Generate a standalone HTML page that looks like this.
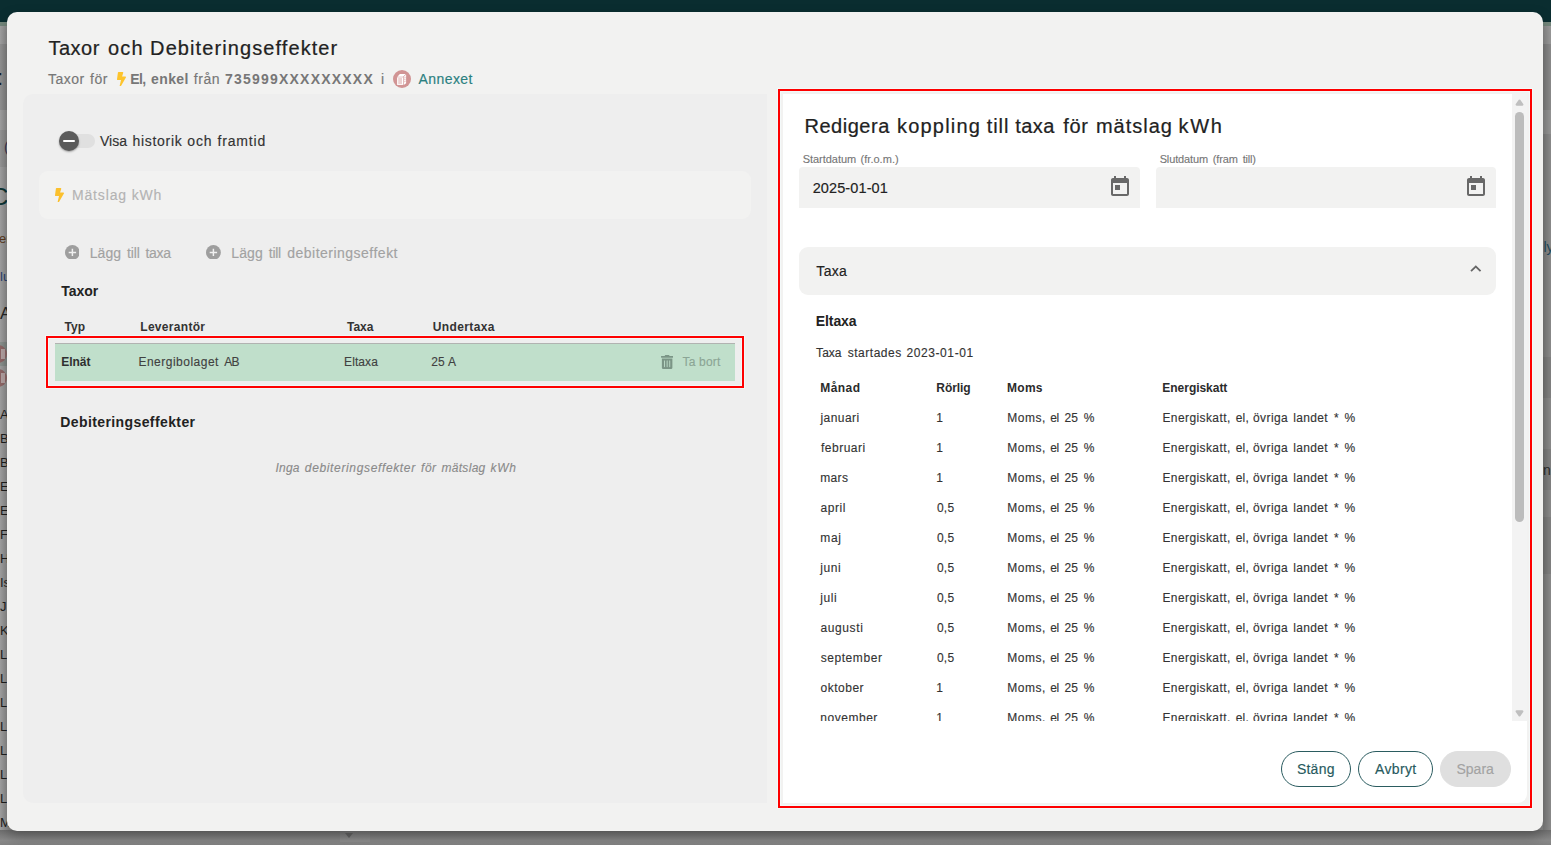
<!DOCTYPE html>
<html lang="sv">
<head>
<meta charset="utf-8">
<title>Taxor och Debiteringseffekter</title>
<style>
*{box-sizing:border-box;margin:0;padding:0}
html,body{width:1551px;height:845px;overflow:hidden}
body{position:relative;background:#8b8b8b;font-family:"Liberation Sans",sans-serif;}
.abs{position:absolute}
.t{position:absolute;white-space:pre;line-height:24px;height:24px}
#topbar{left:0;top:0;width:1551px;height:22px;background:#0a2d30}
#topband{left:0;top:22px;width:1551px;height:4px;background:#74877c}
#bgL{left:0;top:26px;width:8px;height:819px;background:linear-gradient(90deg,#a2a2a2 0,#8d8d8d 100%)}
#bgR{left:1543px;top:26px;width:8px;height:819px;background:linear-gradient(90deg,#7d7d7d 0,#8d8d8d 100%)}
#bgB{left:0;top:830px;width:1551px;height:15px;background:linear-gradient(180deg,#6f6f6f 0,#8a8a8a 70%,#828282 100%)}
.bgt{position:absolute;left:0px;font-size:14px;line-height:16px;color:#1e1e1e;white-space:pre}
#dlg{left:7px;top:12px;width:1536px;height:819px;border-radius:10px;background:#f2f2f1;box-shadow:0 6px 14px rgba(0,0,0,.28)}
#lp{left:16px;top:82px;width:744px;height:709px;border-radius:10px 0 0 10px;background:#eeeeee}
#mbox{left:32px;top:159px;width:712px;height:48px;border-radius:9px;background:#f2f2f1}
#trk{left:55px;top:122px;width:33px;height:14px;border-radius:7px;background:#e0e0e0}
#knob{left:52px;top:119px;width:20px;height:20px;border-radius:50%;background:#5b5b5b;box-shadow:0 1px 2px rgba(0,0,0,.35)}
#knob i{position:absolute;left:4px;top:9px;width:12px;height:2px;background:#fff;border-radius:1px}
#grow{left:48px;top:331px;width:680px;height:38px;background:#c0dfcb;border-top:1px solid #b1b3b1}
.red{position:absolute;border:2px solid #fe0000;box-shadow:0 0 0 1px rgba(245,255,255,.55), inset 0 0 0 1px rgba(245,255,255,.55)}
#red1{left:39px;top:324px;width:698px;height:52px}
#red2{left:771px;top:77px;width:754px;height:719px}
#rp{left:776px;top:82px;width:744px;height:709px;border-radius:0 0 9px 0;background:#ffffff;overflow:hidden}
#scr{left:0;top:0;width:729px;height:627px;overflow:hidden}
#sb{left:729px;top:0;width:15px;height:627px;background:#f3f3f3}
#thumb{left:3px;top:18px;width:9px;height:410px;border-radius:4.5px;background:#bcbcbc}
.inp{position:absolute;top:73px;height:41px;background:#f2f2f1;border-radius:4px 4px 0 0}
#acc{left:16px;top:153px;width:697px;height:48px;border-radius:9px;background:#f2f2f1}
.btn{position:absolute;top:739px;height:36px;border-radius:18px;border:1px solid #2b5c60}
</style>
</head>
<body>
<div id="topbar" class="abs"></div>
<div id="topband" class="abs"></div>
<div id="bgL" class="abs"></div>
<div id="bgR" class="abs"></div>
<div id="bgB" class="abs"></div>
<div class="abs" style="left:0;top:44px;width:8px;height:66px;background:rgba(0,0,0,.085)"></div>
<div class="abs" style="left:0;top:130px;width:8px;height:37px;background:rgba(0,0,0,.06)"></div>
<div class="abs" style="left:0;top:342px;width:8px;height:24px;background:rgba(40,80,60,.16)"></div>
<div class="abs" style="left:1543px;top:26px;width:8px;height:18px;background:rgba(255,255,255,.13)"></div>
<div class="abs" style="left:1543px;top:110px;width:8px;height:24px;background:rgba(255,255,255,.10)"></div>
<div class="abs" style="left:1543px;top:357px;width:8px;height:41px;background:rgba(0,0,0,.06)"></div>
<div class="abs" style="left:1543px;top:449px;width:8px;height:41px;background:rgba(0,0,0,.06)"></div>
<div class="abs" style="left:1543px;top:517px;width:8px;height:57px;background:rgba(0,0,0,.06)"></div>
<div class="bgt" style="left:-3px;top:66px;font-size:22px;line-height:24px;color:#10202a">:</div>
<div class="bgt" style="left:4px;top:139px;font-size:14px;color:#3a3550">(</div>
<div class="bgt" style="left:-9px;top:184px;font-size:24px;line-height:26px;color:#0c3535">C</div>
<div class="bgt" style="left:-1px;top:231px;font-size:13px;color:#5a3a20">er</div>
<div class="bgt" style="left:0px;top:269px;font-size:13px;color:#27406e">lu</div>
<div class="bgt" style="left:0px;top:305px;font-size:17px;line-height:18px;color:#252525">A</div>
<div class="abs" style="left:-11px;top:345px;width:18px;height:18px;border-radius:50%;background:#8f6767"></div>
<div class="abs" style="left:1px;top:349px;width:4px;height:10px;background:#b5a3a3"></div>
<div class="abs" style="left:-11px;top:369px;width:18px;height:18px;border-radius:50%;background:#8f6767"></div>
<div class="abs" style="left:1px;top:373px;width:4px;height:10px;background:#b5a3a3"></div>
<div class="bgt" style="top:407.0px;font-size:13px">A</div>
<div class="bgt" style="top:431.0px;font-size:13px">B</div>
<div class="bgt" style="top:455.0px;font-size:13px">B</div>
<div class="bgt" style="top:479.0px;font-size:13px">E</div>
<div class="bgt" style="top:503.0px;font-size:13px">E</div>
<div class="bgt" style="top:527.0px;font-size:13px">F</div>
<div class="bgt" style="top:551.0px;font-size:13px">H</div>
<div class="bgt" style="top:575.0px;font-size:13px">Is</div>
<div class="bgt" style="top:599.0px;font-size:13px">J</div>
<div class="bgt" style="top:623.0px;font-size:13px">K</div>
<div class="bgt" style="top:647.0px;font-size:13px">L</div>
<div class="bgt" style="top:671.0px;font-size:13px">L</div>
<div class="bgt" style="top:695.0px;font-size:13px">L</div>
<div class="bgt" style="top:719.0px;font-size:13px">L</div>
<div class="bgt" style="top:743.0px;font-size:13px">L</div>
<div class="bgt" style="top:767.0px;font-size:13px">L</div>
<div class="bgt" style="top:791.0px;font-size:13px">L</div>
<div class="bgt" style="top:815.0px;font-size:13px">M</div>
<div class="bgt" style="left:1543.5px;top:239px;font-size:14px;color:#1f4a5c">ly</div>
<div class="bgt" style="left:1543px;top:462px;font-size:14px;color:#2b2b2b">n</div>
<div class="abs" style="left:340px;top:831px;width:30px;height:11px;background:rgba(255,255,255,.05)"></div>
<svg class="abs" style="left:345px;top:833px" width="8" height="5" viewBox="0 0 8 5"><path d="M0 0h8L4 5z" fill="#636363"/></svg>

<div id="dlg" class="abs">
  <div id="lp" class="abs"></div>
  <div id="mbox" class="abs"></div>
  <div id="trk" class="abs"></div>
  <div id="knob" class="abs"><i></i></div>
  <div id="grow" class="abs"></div>
  <div id="red1" class="red"></div>

  <svg class="abs" style="left:109.9px;top:59.6px" width="9" height="14.4" viewBox="0 0 320 512"><path d="M296 160H180.6l42.6-129.8C227.2 15 215.7 0 200 0H56C44 0 33.8 8.9 32.2 20.8l-32 240C-1.7 275.2 9.5 288 24 288h118.7L96.6 482.5c-3.6 15.2 8 29.5 23.3 29.5 8.4 0 16.4-4.4 20.8-12l176-304c9.3-15.900-2.200-36-20.700-36z" fill="#fdc42d"/></svg>
  <svg class="abs" style="left:386px;top:58px" width="18" height="18" viewBox="0 0 18 18">
    <circle cx="9" cy="9" r="9" fill="#d19494"/>
    <path d="M4.3 6.700 L6.900 4.100 H12.700 L10.100 6.700 Z" fill="#fff"/>
    <path d="M10.700 7.100 L13.100 4.600 V13.300 L10.700 14.900 Z" fill="#fff"/>
    <path d="M4.100 7.300 H10.100 V14.900 H4.100 Z" fill="#fff"/>
    <path d="M5.200 8.600h3.800v1H5.200zM5.200 10.500h3.800v1H5.200zM5.200 12.400h3.800v1H5.200z" fill="#d9a3a3"/>
    <path d="M11.300 7.700l1.200-1.200v1l-1.200 1.200zM11.300 9.600l1.200-1v1l-1.200 1zM11.300 11.500l1.200-.9v1l-1.200.9z" fill="#d9a3a3"/>
  </svg>
  <svg class="abs" style="left:48.2px;top:175.600px" width="9" height="14.4" viewBox="0 0 320 512"><path d="M296 160H180.6l42.6-129.8C227.2 15 215.7 0 200 0H56C44 0 33.8 8.9 32.2 20.8l-32 240C-1.7 275.2 9.5 288 24 288h118.7L96.6 482.5c-3.6 15.2 8 29.5 23.3 29.5 8.4 0 16.4-4.4 20.8-12l176-304c9.3-15.900-2.200-36-20.700-36z" fill="#fbc02d"/></svg>
  <svg class="abs" style="left:57.6px;top:232.5px" width="14.8" height="14.8" viewBox="0 0 20 20"><circle cx="10" cy="10" r="10" fill="#9e9e9e"/><path d="M5 9h4V5h2v4h4v2h-4v4H9v-4H5z" fill="#f0f0f0"/></svg>
  <svg class="abs" style="left:199.1px;top:232.5px" width="14.8" height="14.8" viewBox="0 0 20 20"><circle cx="10" cy="10" r="10" fill="#9e9e9e"/><path d="M5 9h4V5h2v4h4v2h-4v4H9v-4H5z" fill="#f0f0f0"/></svg>
  <svg class="abs" style="left:653.7px;top:342.7px" width="12.25" height="14" viewBox="0 0 448 512"><path d="M32 464a48 48 0 0 0 48 48h288a48 48 0 0 0 48-48V128H32zm272-256a16 16 0 0 1 32 0v224a16 16 0 0 1-32 0zm-96 0a16 16 0 0 1 32 0v224a16 16 0 0 1-32 0zm-96 0a16 16 0 0 1 32 0v224a16 16 0 0 1-32 0zM432 32H312l-9.4-18.700A24 24 0 0 0 281.100 0H166.800a23.720 23.720 0 0 0-21.400 13.300L136 32H16A16 16 0 0 0 0 48v32a16 16 0 0 0 16 16h416a16 16 0 0 0 16-16V48a16 16 0 0 0-16-16z" fill="#7b9586"/></svg>

<div class="t" style="left:41.48px;top:24.47px;font-size:20px;color:#222222;letter-spacing:0.503px;-webkit-text-stroke:0.22px">Taxor</div>
<div class="t" style="left:100.91px;top:24.47px;font-size:20px;color:#222222;letter-spacing:1.247px;-webkit-text-stroke:0.22px">och</div>
<div class="t" style="left:143.12px;top:24.47px;font-size:20px;color:#222222;letter-spacing:1.091px;-webkit-text-stroke:0.22px">Debiteringseffekter</div>
<div class="t" style="left:41.07px;top:55.15px;font-size:14px;color:#777777;letter-spacing:0.444px;-webkit-text-stroke:0.15px">Taxor</div>
<div class="t" style="left:82.89px;top:55.15px;font-size:14px;color:#777777;letter-spacing:0.622px;-webkit-text-stroke:0.15px">för</div>
<div class="t" style="left:123.31px;top:55.15px;font-size:14px;color:#777777;letter-spacing:-0.658px;font-weight:700">El,</div>
<div class="t" style="left:144.02px;top:55.15px;font-size:14px;color:#777777;letter-spacing:0.405px;font-weight:700">enkel</div>
<div class="t" style="left:186.67px;top:55.15px;font-size:14px;color:#777777;letter-spacing:0.624px;-webkit-text-stroke:0.15px">från</div>
<div class="t" style="left:217.92px;top:55.15px;font-size:14px;color:#777777;letter-spacing:1.221px;font-weight:700">735999XXXXXXXXX</div>
<div class="t" style="left:373.96px;top:55.15px;font-size:14px;color:#777777;letter-spacing:0.000px;-webkit-text-stroke:0.15px">i</div>
<div class="t" style="left:411.59px;top:55.15px;font-size:14px;color:#2a8080;letter-spacing:0.402px;-webkit-text-stroke:0.15px">Annexet</div>
<div class="t" style="left:92.90px;top:117.15px;font-size:14px;color:#333333;letter-spacing:0.043px;-webkit-text-stroke:0.15px">Visa</div>
<div class="t" style="left:125.40px;top:117.15px;font-size:14px;color:#333333;letter-spacing:0.716px;-webkit-text-stroke:0.15px">historik</div>
<div class="t" style="left:180.30px;top:117.15px;font-size:14px;color:#333333;letter-spacing:0.859px;-webkit-text-stroke:0.15px">och</div>
<div class="t" style="left:210.44px;top:117.15px;font-size:14px;color:#333333;letter-spacing:0.833px;-webkit-text-stroke:0.15px">framtid</div>
<div class="t" style="left:64.95px;top:170.95px;font-size:14px;color:#b4b4b4;letter-spacing:0.853px;-webkit-text-stroke:0.15px">Mätslag kWh</div>
<div class="t" style="left:82.78px;top:229.15px;font-size:14px;color:#a2a2a2;letter-spacing:0.029px;-webkit-text-stroke:0.15px">Lägg</div>
<div class="t" style="left:120.07px;top:229.15px;font-size:14px;color:#a2a2a2;letter-spacing:-0.164px;-webkit-text-stroke:0.15px">till</div>
<div class="t" style="left:138.38px;top:229.15px;font-size:14px;color:#a2a2a2;letter-spacing:-0.240px;-webkit-text-stroke:0.15px">taxa</div>
<div class="t" style="left:224.20px;top:229.15px;font-size:14px;color:#a2a2a2;letter-spacing:0.158px;-webkit-text-stroke:0.15px">Lägg</div>
<div class="t" style="left:261.79px;top:229.15px;font-size:14px;color:#a2a2a2;letter-spacing:-0.263px;-webkit-text-stroke:0.15px">till</div>
<div class="t" style="left:280.28px;top:229.15px;font-size:14px;color:#a2a2a2;letter-spacing:0.485px;-webkit-text-stroke:0.15px">debiteringseffekt</div>
<div class="t" style="left:54.13px;top:267.45px;font-size:14px;color:#222222;letter-spacing:0.005px;font-weight:700">Taxor</div>
<div class="t" style="left:57.44px;top:303.34px;font-size:12px;color:#333333;letter-spacing:0.038px;font-weight:700">Typ</div>
<div class="t" style="left:133.26px;top:303.34px;font-size:12px;color:#333333;letter-spacing:0.303px;font-weight:700">Leverantör</div>
<div class="t" style="left:339.96px;top:303.34px;font-size:12px;color:#333333;letter-spacing:-0.005px;font-weight:700">Taxa</div>
<div class="t" style="left:425.67px;top:303.34px;font-size:12px;color:#333333;letter-spacing:0.391px;font-weight:700">Undertaxa</div>
<div class="t" style="left:54.32px;top:338.14px;font-size:12px;color:#2f2f2f;letter-spacing:-0.058px;font-weight:700">Elnät</div>
<div class="t" style="left:131.48px;top:338.14px;font-size:12px;color:#414141;letter-spacing:0.489px;-webkit-text-stroke:0.13px">Energibolaget</div>
<div class="t" style="left:217.32px;top:338.14px;font-size:12px;color:#414141;letter-spacing:-0.697px;-webkit-text-stroke:0.13px">AB</div>
<div class="t" style="left:337.07px;top:338.14px;font-size:12px;color:#414141;letter-spacing:0.091px;-webkit-text-stroke:0.13px">Eltaxa</div>
<div class="t" style="left:424.21px;top:338.14px;font-size:12px;color:#414141;letter-spacing:0.236px;-webkit-text-stroke:0.13px">25 A</div>
<div class="t" style="left:675.49px;top:338.14px;font-size:12px;color:#8ba595;letter-spacing:0.206px;-webkit-text-stroke:0.13px">Ta bort</div>
<div class="t" style="left:53.25px;top:398.15px;font-size:14px;color:#222222;letter-spacing:0.399px;font-weight:700">Debiteringseffekter</div>
<div class="t" style="left:268.61px;top:443.54px;font-size:12px;color:#8a8a8a;letter-spacing:0.152px;-webkit-text-stroke:0.13px;font-style:italic">Inga</div>
<div class="t" style="left:297.83px;top:443.54px;font-size:12px;color:#8a8a8a;letter-spacing:0.645px;-webkit-text-stroke:0.13px;font-style:italic">debiteringseffekter</div>
<div class="t" style="left:414.12px;top:443.54px;font-size:12px;color:#8a8a8a;letter-spacing:0.436px;-webkit-text-stroke:0.13px;font-style:italic">för</div>
<div class="t" style="left:434.48px;top:443.54px;font-size:12px;color:#8a8a8a;letter-spacing:0.298px;-webkit-text-stroke:0.13px;font-style:italic">mätslag</div>
<div class="t" style="left:483.58px;top:443.54px;font-size:12px;color:#8a8a8a;letter-spacing:0.614px;-webkit-text-stroke:0.13px;font-style:italic">kWh</div>

  <div id="rp" class="abs">
    <div id="scr" class="abs">
      <div class="inp" style="left:16px;width:341px"></div>
      <div class="inp" style="left:373px;width:340px"></div>
      <div id="acc" class="abs"></div>

      <svg class="abs" style="left:324.7px;top:81.3px" width="24" height="24" viewBox="0 0 24 24"><path d="M19 3h-1V1h-2v2H8V1H6v2H5c-1.11 0-1.99.9-1.99 2L3 19c0 1.1.89 2 2 2h14c1.1 0 2-.9 2-2V5c0-1.1-.9-2-2-2zm0 16H5V8h14v11zM7 10h5v5H7z" fill="#686868"/></svg>
      <svg class="abs" style="left:681px;top:81.3px" width="24" height="24" viewBox="0 0 24 24"><path d="M19 3h-1V1h-2v2H8V1H6v2H5c-1.11 0-1.99.9-1.99 2L3 19c0 1.1.89 2 2 2h14c1.1 0 2-.9 2-2V5c0-1.1-.9-2-2-2zm0 16H5V8h14v11zM7 10h5v5H7z" fill="#686868"/></svg>
      <svg class="abs" style="left:682.2px;top:163.8px" width="21.6" height="21.6" viewBox="0 0 24 24"><path d="M12 8l-6 6 1.41 1.41L12 10.83l4.59 4.58L18 14z" fill="#666"/></svg>

<div class="t" style="left:21.53px;top:19.77px;font-size:20px;color:#222222;letter-spacing:0.519px;-webkit-text-stroke:0.22px">Redigera</div>
<div class="t" style="left:113.95px;top:19.77px;font-size:20px;color:#222222;letter-spacing:1.206px;-webkit-text-stroke:0.22px">koppling</div>
<div class="t" style="left:203.86px;top:19.77px;font-size:20px;color:#222222;letter-spacing:0.867px;-webkit-text-stroke:0.22px">till</div>
<div class="t" style="left:232.34px;top:19.77px;font-size:20px;color:#222222;letter-spacing:0.396px;-webkit-text-stroke:0.22px">taxa</div>
<div class="t" style="left:280.22px;top:19.77px;font-size:20px;color:#222222;letter-spacing:0.618px;-webkit-text-stroke:0.22px">för</div>
<div class="t" style="left:312.94px;top:19.77px;font-size:20px;color:#222222;letter-spacing:1.003px;-webkit-text-stroke:0.22px">mätslag</div>
<div class="t" style="left:395.57px;top:19.77px;font-size:20px;color:#222222;letter-spacing:1.605px;-webkit-text-stroke:0.22px">kWh</div>
<div class="t" style="left:19.63px;top:53.19px;font-size:11px;color:#767676;letter-spacing:-0.022px;-webkit-text-stroke:0.12px">Startdatum</div>
<div class="t" style="left:77.52px;top:53.19px;font-size:11px;color:#767676;letter-spacing:0.030px;-webkit-text-stroke:0.12px">(fr.o.m.)</div>
<div class="t" style="left:376.65px;top:53.19px;font-size:11px;color:#767676;letter-spacing:-0.124px;-webkit-text-stroke:0.12px">Slutdatum</div>
<div class="t" style="left:429.74px;top:53.19px;font-size:11px;color:#767676;letter-spacing:-0.090px;-webkit-text-stroke:0.12px">(fram</div>
<div class="t" style="left:459.65px;top:53.19px;font-size:11px;color:#767676;letter-spacing:-0.167px;-webkit-text-stroke:0.12px">till)</div>
<div class="t" style="left:29.63px;top:81.98px;font-size:14.5px;color:#222222;letter-spacing:0.113px;-webkit-text-stroke:0.16px">2025-01-01</div>
<div class="t" style="left:33.37px;top:165.15px;font-size:14px;color:#222222;letter-spacing:0.302px;-webkit-text-stroke:0.15px">Taxa</div>
<div class="t" style="left:32.75px;top:215.15px;font-size:14px;color:#222222;letter-spacing:-0.076px;font-weight:700">Eltaxa</div>
<div class="t" style="left:33.11px;top:246.84px;font-size:12px;color:#333333;letter-spacing:0.026px;-webkit-text-stroke:0.13px">Taxa</div>
<div class="t" style="left:64.76px;top:246.84px;font-size:12px;color:#333333;letter-spacing:0.517px;-webkit-text-stroke:0.13px">startades</div>
<div class="t" style="left:123.41px;top:246.84px;font-size:12px;color:#333333;letter-spacing:0.598px;-webkit-text-stroke:0.13px">2023-01-01</div>
<div class="t" style="left:37.36px;top:281.84px;font-size:12px;color:#2b2b2b;letter-spacing:0.407px;font-weight:700">Månad</div>
<div class="t" style="left:153.36px;top:281.84px;font-size:12px;color:#2b2b2b;letter-spacing:-0.096px;font-weight:700">Rörlig</div>
<div class="t" style="left:224.09px;top:281.84px;font-size:12px;color:#2b2b2b;letter-spacing:0.246px;font-weight:700">Moms</div>
<div class="t" style="left:379.36px;top:281.84px;font-size:12px;color:#2b2b2b;letter-spacing:-0.037px;font-weight:700">Energiskatt</div>
<div class="t" style="left:37.38px;top:311.84px;font-size:12px;color:#333333;letter-spacing:0.471px;-webkit-text-stroke:0.13px">januari</div>
<div class="t" style="left:153.16px;top:311.84px;font-size:12px;color:#333333;letter-spacing:0.000px;-webkit-text-stroke:0.13px">1</div>
<div class="t" style="left:224.25px;top:311.84px;font-size:12px;color:#333333;letter-spacing:0.497px;-webkit-text-stroke:0.13px">Moms,</div>
<div class="t" style="left:267.36px;top:311.84px;font-size:12px;color:#333333;letter-spacing:-0.604px;-webkit-text-stroke:0.13px">el</div>
<div class="t" style="left:281.41px;top:311.84px;font-size:12px;color:#333333;letter-spacing:0.096px;-webkit-text-stroke:0.13px">25</div>
<div class="t" style="left:300.65px;top:311.84px;font-size:12px;color:#333333;letter-spacing:0.000px;-webkit-text-stroke:0.13px">%</div>
<div class="t" style="left:379.40px;top:311.84px;font-size:12px;color:#333333;letter-spacing:0.410px;-webkit-text-stroke:0.13px">Energiskatt,</div>
<div class="t" style="left:452.81px;top:311.84px;font-size:12px;color:#333333;letter-spacing:0.120px;-webkit-text-stroke:0.13px">el,</div>
<div class="t" style="left:470.01px;top:311.84px;font-size:12px;color:#333333;letter-spacing:0.418px;-webkit-text-stroke:0.13px">övriga</div>
<div class="t" style="left:510.21px;top:311.84px;font-size:12px;color:#333333;letter-spacing:0.345px;-webkit-text-stroke:0.13px">landet</div>
<div class="t" style="left:550.90px;top:311.84px;font-size:12px;color:#333333;letter-spacing:0.000px;-webkit-text-stroke:0.13px">*</div>
<div class="t" style="left:561.39px;top:311.84px;font-size:12px;color:#333333;letter-spacing:0.000px;-webkit-text-stroke:0.13px">%</div>
<div class="t" style="left:37.97px;top:341.84px;font-size:12px;color:#333333;letter-spacing:0.510px;-webkit-text-stroke:0.13px">februari</div>
<div class="t" style="left:153.16px;top:341.84px;font-size:12px;color:#333333;letter-spacing:0.000px;-webkit-text-stroke:0.13px">1</div>
<div class="t" style="left:224.25px;top:341.84px;font-size:12px;color:#333333;letter-spacing:0.497px;-webkit-text-stroke:0.13px">Moms,</div>
<div class="t" style="left:267.36px;top:341.84px;font-size:12px;color:#333333;letter-spacing:-0.604px;-webkit-text-stroke:0.13px">el</div>
<div class="t" style="left:281.41px;top:341.84px;font-size:12px;color:#333333;letter-spacing:0.096px;-webkit-text-stroke:0.13px">25</div>
<div class="t" style="left:300.65px;top:341.84px;font-size:12px;color:#333333;letter-spacing:0.000px;-webkit-text-stroke:0.13px">%</div>
<div class="t" style="left:379.40px;top:341.84px;font-size:12px;color:#333333;letter-spacing:0.410px;-webkit-text-stroke:0.13px">Energiskatt,</div>
<div class="t" style="left:452.81px;top:341.84px;font-size:12px;color:#333333;letter-spacing:0.120px;-webkit-text-stroke:0.13px">el,</div>
<div class="t" style="left:470.01px;top:341.84px;font-size:12px;color:#333333;letter-spacing:0.418px;-webkit-text-stroke:0.13px">övriga</div>
<div class="t" style="left:510.21px;top:341.84px;font-size:12px;color:#333333;letter-spacing:0.345px;-webkit-text-stroke:0.13px">landet</div>
<div class="t" style="left:550.90px;top:341.84px;font-size:12px;color:#333333;letter-spacing:0.000px;-webkit-text-stroke:0.13px">*</div>
<div class="t" style="left:561.39px;top:341.84px;font-size:12px;color:#333333;letter-spacing:0.000px;-webkit-text-stroke:0.13px">%</div>
<div class="t" style="left:37.30px;top:371.84px;font-size:12px;color:#333333;letter-spacing:0.307px;-webkit-text-stroke:0.13px">mars</div>
<div class="t" style="left:153.16px;top:371.84px;font-size:12px;color:#333333;letter-spacing:0.000px;-webkit-text-stroke:0.13px">1</div>
<div class="t" style="left:224.25px;top:371.84px;font-size:12px;color:#333333;letter-spacing:0.497px;-webkit-text-stroke:0.13px">Moms,</div>
<div class="t" style="left:267.36px;top:371.84px;font-size:12px;color:#333333;letter-spacing:-0.604px;-webkit-text-stroke:0.13px">el</div>
<div class="t" style="left:281.41px;top:371.84px;font-size:12px;color:#333333;letter-spacing:0.096px;-webkit-text-stroke:0.13px">25</div>
<div class="t" style="left:300.65px;top:371.84px;font-size:12px;color:#333333;letter-spacing:0.000px;-webkit-text-stroke:0.13px">%</div>
<div class="t" style="left:379.40px;top:371.84px;font-size:12px;color:#333333;letter-spacing:0.410px;-webkit-text-stroke:0.13px">Energiskatt,</div>
<div class="t" style="left:452.81px;top:371.84px;font-size:12px;color:#333333;letter-spacing:0.120px;-webkit-text-stroke:0.13px">el,</div>
<div class="t" style="left:470.01px;top:371.84px;font-size:12px;color:#333333;letter-spacing:0.418px;-webkit-text-stroke:0.13px">övriga</div>
<div class="t" style="left:510.21px;top:371.84px;font-size:12px;color:#333333;letter-spacing:0.345px;-webkit-text-stroke:0.13px">landet</div>
<div class="t" style="left:550.90px;top:371.84px;font-size:12px;color:#333333;letter-spacing:0.000px;-webkit-text-stroke:0.13px">*</div>
<div class="t" style="left:561.39px;top:371.84px;font-size:12px;color:#333333;letter-spacing:0.000px;-webkit-text-stroke:0.13px">%</div>
<div class="t" style="left:37.52px;top:401.84px;font-size:12px;color:#333333;letter-spacing:0.547px;-webkit-text-stroke:0.13px">april</div>
<div class="t" style="left:153.98px;top:401.84px;font-size:12px;color:#333333;letter-spacing:0.213px;-webkit-text-stroke:0.13px">0,5</div>
<div class="t" style="left:224.25px;top:401.84px;font-size:12px;color:#333333;letter-spacing:0.497px;-webkit-text-stroke:0.13px">Moms,</div>
<div class="t" style="left:267.36px;top:401.84px;font-size:12px;color:#333333;letter-spacing:-0.604px;-webkit-text-stroke:0.13px">el</div>
<div class="t" style="left:281.41px;top:401.84px;font-size:12px;color:#333333;letter-spacing:0.096px;-webkit-text-stroke:0.13px">25</div>
<div class="t" style="left:300.65px;top:401.84px;font-size:12px;color:#333333;letter-spacing:0.000px;-webkit-text-stroke:0.13px">%</div>
<div class="t" style="left:379.40px;top:401.84px;font-size:12px;color:#333333;letter-spacing:0.410px;-webkit-text-stroke:0.13px">Energiskatt,</div>
<div class="t" style="left:452.81px;top:401.84px;font-size:12px;color:#333333;letter-spacing:0.120px;-webkit-text-stroke:0.13px">el,</div>
<div class="t" style="left:470.01px;top:401.84px;font-size:12px;color:#333333;letter-spacing:0.418px;-webkit-text-stroke:0.13px">övriga</div>
<div class="t" style="left:510.21px;top:401.84px;font-size:12px;color:#333333;letter-spacing:0.345px;-webkit-text-stroke:0.13px">landet</div>
<div class="t" style="left:550.90px;top:401.84px;font-size:12px;color:#333333;letter-spacing:0.000px;-webkit-text-stroke:0.13px">*</div>
<div class="t" style="left:561.39px;top:401.84px;font-size:12px;color:#333333;letter-spacing:0.000px;-webkit-text-stroke:0.13px">%</div>
<div class="t" style="left:37.30px;top:431.84px;font-size:12px;color:#333333;letter-spacing:0.644px;-webkit-text-stroke:0.13px">maj</div>
<div class="t" style="left:153.98px;top:431.84px;font-size:12px;color:#333333;letter-spacing:0.213px;-webkit-text-stroke:0.13px">0,5</div>
<div class="t" style="left:224.25px;top:431.84px;font-size:12px;color:#333333;letter-spacing:0.497px;-webkit-text-stroke:0.13px">Moms,</div>
<div class="t" style="left:267.36px;top:431.84px;font-size:12px;color:#333333;letter-spacing:-0.604px;-webkit-text-stroke:0.13px">el</div>
<div class="t" style="left:281.41px;top:431.84px;font-size:12px;color:#333333;letter-spacing:0.096px;-webkit-text-stroke:0.13px">25</div>
<div class="t" style="left:300.65px;top:431.84px;font-size:12px;color:#333333;letter-spacing:0.000px;-webkit-text-stroke:0.13px">%</div>
<div class="t" style="left:379.40px;top:431.84px;font-size:12px;color:#333333;letter-spacing:0.410px;-webkit-text-stroke:0.13px">Energiskatt,</div>
<div class="t" style="left:452.81px;top:431.84px;font-size:12px;color:#333333;letter-spacing:0.120px;-webkit-text-stroke:0.13px">el,</div>
<div class="t" style="left:470.01px;top:431.84px;font-size:12px;color:#333333;letter-spacing:0.418px;-webkit-text-stroke:0.13px">övriga</div>
<div class="t" style="left:510.21px;top:431.84px;font-size:12px;color:#333333;letter-spacing:0.345px;-webkit-text-stroke:0.13px">landet</div>
<div class="t" style="left:550.90px;top:431.84px;font-size:12px;color:#333333;letter-spacing:0.000px;-webkit-text-stroke:0.13px">*</div>
<div class="t" style="left:561.39px;top:431.84px;font-size:12px;color:#333333;letter-spacing:0.000px;-webkit-text-stroke:0.13px">%</div>
<div class="t" style="left:37.33px;top:461.84px;font-size:12px;color:#333333;letter-spacing:0.534px;-webkit-text-stroke:0.13px">juni</div>
<div class="t" style="left:153.98px;top:461.84px;font-size:12px;color:#333333;letter-spacing:0.213px;-webkit-text-stroke:0.13px">0,5</div>
<div class="t" style="left:224.25px;top:461.84px;font-size:12px;color:#333333;letter-spacing:0.497px;-webkit-text-stroke:0.13px">Moms,</div>
<div class="t" style="left:267.36px;top:461.84px;font-size:12px;color:#333333;letter-spacing:-0.604px;-webkit-text-stroke:0.13px">el</div>
<div class="t" style="left:281.41px;top:461.84px;font-size:12px;color:#333333;letter-spacing:0.096px;-webkit-text-stroke:0.13px">25</div>
<div class="t" style="left:300.65px;top:461.84px;font-size:12px;color:#333333;letter-spacing:0.000px;-webkit-text-stroke:0.13px">%</div>
<div class="t" style="left:379.40px;top:461.84px;font-size:12px;color:#333333;letter-spacing:0.410px;-webkit-text-stroke:0.13px">Energiskatt,</div>
<div class="t" style="left:452.81px;top:461.84px;font-size:12px;color:#333333;letter-spacing:0.120px;-webkit-text-stroke:0.13px">el,</div>
<div class="t" style="left:470.01px;top:461.84px;font-size:12px;color:#333333;letter-spacing:0.418px;-webkit-text-stroke:0.13px">övriga</div>
<div class="t" style="left:510.21px;top:461.84px;font-size:12px;color:#333333;letter-spacing:0.345px;-webkit-text-stroke:0.13px">landet</div>
<div class="t" style="left:550.90px;top:461.84px;font-size:12px;color:#333333;letter-spacing:0.000px;-webkit-text-stroke:0.13px">*</div>
<div class="t" style="left:561.39px;top:461.84px;font-size:12px;color:#333333;letter-spacing:0.000px;-webkit-text-stroke:0.13px">%</div>
<div class="t" style="left:37.34px;top:491.84px;font-size:12px;color:#333333;letter-spacing:0.529px;-webkit-text-stroke:0.13px">juli</div>
<div class="t" style="left:153.98px;top:491.84px;font-size:12px;color:#333333;letter-spacing:0.213px;-webkit-text-stroke:0.13px">0,5</div>
<div class="t" style="left:224.25px;top:491.84px;font-size:12px;color:#333333;letter-spacing:0.497px;-webkit-text-stroke:0.13px">Moms,</div>
<div class="t" style="left:267.36px;top:491.84px;font-size:12px;color:#333333;letter-spacing:-0.604px;-webkit-text-stroke:0.13px">el</div>
<div class="t" style="left:281.41px;top:491.84px;font-size:12px;color:#333333;letter-spacing:0.096px;-webkit-text-stroke:0.13px">25</div>
<div class="t" style="left:300.65px;top:491.84px;font-size:12px;color:#333333;letter-spacing:0.000px;-webkit-text-stroke:0.13px">%</div>
<div class="t" style="left:379.40px;top:491.84px;font-size:12px;color:#333333;letter-spacing:0.410px;-webkit-text-stroke:0.13px">Energiskatt,</div>
<div class="t" style="left:452.81px;top:491.84px;font-size:12px;color:#333333;letter-spacing:0.120px;-webkit-text-stroke:0.13px">el,</div>
<div class="t" style="left:470.01px;top:491.84px;font-size:12px;color:#333333;letter-spacing:0.418px;-webkit-text-stroke:0.13px">övriga</div>
<div class="t" style="left:510.21px;top:491.84px;font-size:12px;color:#333333;letter-spacing:0.345px;-webkit-text-stroke:0.13px">landet</div>
<div class="t" style="left:550.90px;top:491.84px;font-size:12px;color:#333333;letter-spacing:0.000px;-webkit-text-stroke:0.13px">*</div>
<div class="t" style="left:561.39px;top:491.84px;font-size:12px;color:#333333;letter-spacing:0.000px;-webkit-text-stroke:0.13px">%</div>
<div class="t" style="left:37.52px;top:521.84px;font-size:12px;color:#333333;letter-spacing:0.599px;-webkit-text-stroke:0.13px">augusti</div>
<div class="t" style="left:153.98px;top:521.84px;font-size:12px;color:#333333;letter-spacing:0.213px;-webkit-text-stroke:0.13px">0,5</div>
<div class="t" style="left:224.25px;top:521.84px;font-size:12px;color:#333333;letter-spacing:0.497px;-webkit-text-stroke:0.13px">Moms,</div>
<div class="t" style="left:267.36px;top:521.84px;font-size:12px;color:#333333;letter-spacing:-0.604px;-webkit-text-stroke:0.13px">el</div>
<div class="t" style="left:281.41px;top:521.84px;font-size:12px;color:#333333;letter-spacing:0.096px;-webkit-text-stroke:0.13px">25</div>
<div class="t" style="left:300.65px;top:521.84px;font-size:12px;color:#333333;letter-spacing:0.000px;-webkit-text-stroke:0.13px">%</div>
<div class="t" style="left:379.40px;top:521.84px;font-size:12px;color:#333333;letter-spacing:0.410px;-webkit-text-stroke:0.13px">Energiskatt,</div>
<div class="t" style="left:452.81px;top:521.84px;font-size:12px;color:#333333;letter-spacing:0.120px;-webkit-text-stroke:0.13px">el,</div>
<div class="t" style="left:470.01px;top:521.84px;font-size:12px;color:#333333;letter-spacing:0.418px;-webkit-text-stroke:0.13px">övriga</div>
<div class="t" style="left:510.21px;top:521.84px;font-size:12px;color:#333333;letter-spacing:0.345px;-webkit-text-stroke:0.13px">landet</div>
<div class="t" style="left:550.90px;top:521.84px;font-size:12px;color:#333333;letter-spacing:0.000px;-webkit-text-stroke:0.13px">*</div>
<div class="t" style="left:561.39px;top:521.84px;font-size:12px;color:#333333;letter-spacing:0.000px;-webkit-text-stroke:0.13px">%</div>
<div class="t" style="left:37.64px;top:551.84px;font-size:12px;color:#333333;letter-spacing:0.572px;-webkit-text-stroke:0.13px">september</div>
<div class="t" style="left:153.98px;top:551.84px;font-size:12px;color:#333333;letter-spacing:0.213px;-webkit-text-stroke:0.13px">0,5</div>
<div class="t" style="left:224.25px;top:551.84px;font-size:12px;color:#333333;letter-spacing:0.497px;-webkit-text-stroke:0.13px">Moms,</div>
<div class="t" style="left:267.36px;top:551.84px;font-size:12px;color:#333333;letter-spacing:-0.604px;-webkit-text-stroke:0.13px">el</div>
<div class="t" style="left:281.41px;top:551.84px;font-size:12px;color:#333333;letter-spacing:0.096px;-webkit-text-stroke:0.13px">25</div>
<div class="t" style="left:300.65px;top:551.84px;font-size:12px;color:#333333;letter-spacing:0.000px;-webkit-text-stroke:0.13px">%</div>
<div class="t" style="left:379.40px;top:551.84px;font-size:12px;color:#333333;letter-spacing:0.410px;-webkit-text-stroke:0.13px">Energiskatt,</div>
<div class="t" style="left:452.81px;top:551.84px;font-size:12px;color:#333333;letter-spacing:0.120px;-webkit-text-stroke:0.13px">el,</div>
<div class="t" style="left:470.01px;top:551.84px;font-size:12px;color:#333333;letter-spacing:0.418px;-webkit-text-stroke:0.13px">övriga</div>
<div class="t" style="left:510.21px;top:551.84px;font-size:12px;color:#333333;letter-spacing:0.345px;-webkit-text-stroke:0.13px">landet</div>
<div class="t" style="left:550.90px;top:551.84px;font-size:12px;color:#333333;letter-spacing:0.000px;-webkit-text-stroke:0.13px">*</div>
<div class="t" style="left:561.39px;top:551.84px;font-size:12px;color:#333333;letter-spacing:0.000px;-webkit-text-stroke:0.13px">%</div>
<div class="t" style="left:37.54px;top:581.84px;font-size:12px;color:#333333;letter-spacing:0.498px;-webkit-text-stroke:0.13px">oktober</div>
<div class="t" style="left:153.16px;top:581.84px;font-size:12px;color:#333333;letter-spacing:0.000px;-webkit-text-stroke:0.13px">1</div>
<div class="t" style="left:224.25px;top:581.84px;font-size:12px;color:#333333;letter-spacing:0.497px;-webkit-text-stroke:0.13px">Moms,</div>
<div class="t" style="left:267.36px;top:581.84px;font-size:12px;color:#333333;letter-spacing:-0.604px;-webkit-text-stroke:0.13px">el</div>
<div class="t" style="left:281.41px;top:581.84px;font-size:12px;color:#333333;letter-spacing:0.096px;-webkit-text-stroke:0.13px">25</div>
<div class="t" style="left:300.65px;top:581.84px;font-size:12px;color:#333333;letter-spacing:0.000px;-webkit-text-stroke:0.13px">%</div>
<div class="t" style="left:379.40px;top:581.84px;font-size:12px;color:#333333;letter-spacing:0.410px;-webkit-text-stroke:0.13px">Energiskatt,</div>
<div class="t" style="left:452.81px;top:581.84px;font-size:12px;color:#333333;letter-spacing:0.120px;-webkit-text-stroke:0.13px">el,</div>
<div class="t" style="left:470.01px;top:581.84px;font-size:12px;color:#333333;letter-spacing:0.418px;-webkit-text-stroke:0.13px">övriga</div>
<div class="t" style="left:510.21px;top:581.84px;font-size:12px;color:#333333;letter-spacing:0.345px;-webkit-text-stroke:0.13px">landet</div>
<div class="t" style="left:550.90px;top:581.84px;font-size:12px;color:#333333;letter-spacing:0.000px;-webkit-text-stroke:0.13px">*</div>
<div class="t" style="left:561.39px;top:581.84px;font-size:12px;color:#333333;letter-spacing:0.000px;-webkit-text-stroke:0.13px">%</div>
<div class="t" style="left:37.30px;top:611.84px;font-size:12px;color:#333333;letter-spacing:0.523px;-webkit-text-stroke:0.13px">november</div>
<div class="t" style="left:153.16px;top:611.84px;font-size:12px;color:#333333;letter-spacing:0.000px;-webkit-text-stroke:0.13px">1</div>
<div class="t" style="left:224.25px;top:611.84px;font-size:12px;color:#333333;letter-spacing:0.497px;-webkit-text-stroke:0.13px">Moms,</div>
<div class="t" style="left:267.36px;top:611.84px;font-size:12px;color:#333333;letter-spacing:-0.604px;-webkit-text-stroke:0.13px">el</div>
<div class="t" style="left:281.41px;top:611.84px;font-size:12px;color:#333333;letter-spacing:0.096px;-webkit-text-stroke:0.13px">25</div>
<div class="t" style="left:300.65px;top:611.84px;font-size:12px;color:#333333;letter-spacing:0.000px;-webkit-text-stroke:0.13px">%</div>
<div class="t" style="left:379.40px;top:611.84px;font-size:12px;color:#333333;letter-spacing:0.410px;-webkit-text-stroke:0.13px">Energiskatt,</div>
<div class="t" style="left:452.81px;top:611.84px;font-size:12px;color:#333333;letter-spacing:0.120px;-webkit-text-stroke:0.13px">el,</div>
<div class="t" style="left:470.01px;top:611.84px;font-size:12px;color:#333333;letter-spacing:0.418px;-webkit-text-stroke:0.13px">övriga</div>
<div class="t" style="left:510.21px;top:611.84px;font-size:12px;color:#333333;letter-spacing:0.345px;-webkit-text-stroke:0.13px">landet</div>
<div class="t" style="left:550.90px;top:611.84px;font-size:12px;color:#333333;letter-spacing:0.000px;-webkit-text-stroke:0.13px">*</div>
<div class="t" style="left:561.39px;top:611.84px;font-size:12px;color:#333333;letter-spacing:0.000px;-webkit-text-stroke:0.13px">%</div>
<div class="t" style="left:36.66px;top:641.84px;font-size:12px;color:#333333;letter-spacing:0.300px;-webkit-text-stroke:0.13px">december</div>
<div class="t" style="left:153.16px;top:641.84px;font-size:12px;color:#333333;letter-spacing:0.000px;-webkit-text-stroke:0.13px">1</div>
<div class="t" style="left:224.25px;top:641.84px;font-size:12px;color:#333333;letter-spacing:0.497px;-webkit-text-stroke:0.13px">Moms,</div>
<div class="t" style="left:267.36px;top:641.84px;font-size:12px;color:#333333;letter-spacing:-0.604px;-webkit-text-stroke:0.13px">el</div>
<div class="t" style="left:281.41px;top:641.84px;font-size:12px;color:#333333;letter-spacing:0.096px;-webkit-text-stroke:0.13px">25</div>
<div class="t" style="left:300.65px;top:641.84px;font-size:12px;color:#333333;letter-spacing:0.000px;-webkit-text-stroke:0.13px">%</div>
<div class="t" style="left:379.40px;top:641.84px;font-size:12px;color:#333333;letter-spacing:0.410px;-webkit-text-stroke:0.13px">Energiskatt,</div>
<div class="t" style="left:452.81px;top:641.84px;font-size:12px;color:#333333;letter-spacing:0.120px;-webkit-text-stroke:0.13px">el,</div>
<div class="t" style="left:470.01px;top:641.84px;font-size:12px;color:#333333;letter-spacing:0.418px;-webkit-text-stroke:0.13px">övriga</div>
<div class="t" style="left:510.21px;top:641.84px;font-size:12px;color:#333333;letter-spacing:0.345px;-webkit-text-stroke:0.13px">landet</div>
<div class="t" style="left:550.90px;top:641.84px;font-size:12px;color:#333333;letter-spacing:0.000px;-webkit-text-stroke:0.13px">*</div>
<div class="t" style="left:561.39px;top:641.84px;font-size:12px;color:#333333;letter-spacing:0.000px;-webkit-text-stroke:0.13px">%</div>
    </div>
    <div id="sb" class="abs">
      <svg class="abs" style="left:3px;top:5px" width="9" height="7" viewBox="0 0 9 7"><path d="M4.5 1.700 L7.300 5.600 H1.700 Z" fill="#bfbfbf" stroke="#bfbfbf" stroke-width="2.3" stroke-linejoin="round"/></svg>
      <div id="thumb" class="abs"></div>
      <svg class="abs" style="left:3px;top:616px" width="9" height="7" viewBox="0 0 9 7"><path d="M4.5 5.300 L7.300 1.400 H1.700 Z" fill="#bfbfbf" stroke="#bfbfbf" stroke-width="2.3" stroke-linejoin="round"/></svg>
    </div>
  </div>
  <div id="red2" class="red"></div>
  <div class="btn" style="left:1274px;width:70px"></div>
  <div class="btn" style="left:1351px;width:75px"></div>
  <div class="btn" style="left:1433px;width:71px;background:#dfdfdf;border-color:#dfdfdf"></div>
<div class="t" style="left:1289.90px;top:745.15px;font-size:14px;color:#275a5e;letter-spacing:0.242px;-webkit-text-stroke:0.15px">Stäng</div>
<div class="t" style="left:1368.05px;top:745.15px;font-size:14px;color:#275a5e;letter-spacing:0.355px;-webkit-text-stroke:0.15px">Avbryt</div>
<div class="t" style="left:1449.52px;top:745.15px;font-size:14px;color:#a3a3a3;letter-spacing:-0.008px;-webkit-text-stroke:0.15px">Spara</div>
</div>
</body>
</html>
